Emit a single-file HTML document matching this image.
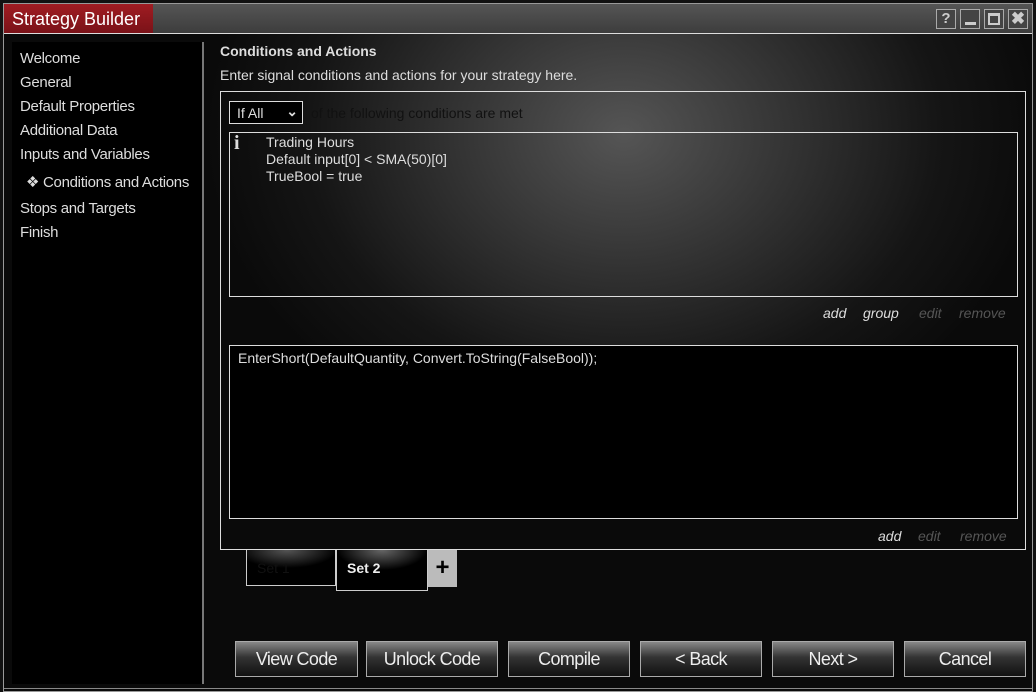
<!DOCTYPE html>
<html><head><style>
*{margin:0;padding:0;box-sizing:border-box}
body{width:1036px;height:692px;background:#111;position:relative;overflow:hidden;font-family:"Liberation Sans",sans-serif;color:#ddd}
.a{position:absolute}
.win{left:3px;top:3px;width:1030px;height:689px;background:#0a0a0a;border:1px solid #999}
.tb{left:4px;top:4px;width:1028px;height:30px;background:linear-gradient(#555,#3c3c3c)}
.title{left:4px;top:4px;width:149px;height:29px;background:linear-gradient(#a01c22,#7a1218);color:#fff;font-size:18px;padding:5px 0 0 8px}
.wb{top:9px;width:20px;height:20px;border:1px solid #aaa;background:#444;color:#ccc;font-weight:bold;font-size:15px;text-align:center;line-height:18px}
.nav{left:12px;top:42px;width:190px;height:642px;background:#000;font-size:15px;letter-spacing:-0.3px}
.nav div{position:absolute;left:8px}
.content{left:204px;top:34px;width:827px;height:656px;background:radial-gradient(ellipse 420px 330px at 420px 100px,#555 0%,#333 40%,#151515 75%,#0a0a0a 100%)}
.box{border:1px solid #ddd;background:#000}
.btn{top:641px;height:36px;border:1px solid #aaa;background:linear-gradient(#888 0%,#333 45%,#111 100%);color:#eee;font-size:18px;letter-spacing:-0.6px;text-align:center;line-height:34px}
.lk{font-style:italic;font-size:14px}
</style></head><body>
<div class="a win"></div>
<div class="a tb"></div>
<div class="a title">Strategy Builder</div>
<div class="a wb" style="left:936px">?</div>
<div class="a wb" style="left:960px"><div style="position:absolute;left:4px;top:12px;width:11px;height:3px;background:#ccc"></div></div>
<div class="a wb" style="left:984px"><div style="position:absolute;left:3px;top:3px;width:12px;height:12px;border:2px solid #ccc;border-top-width:3px"></div></div>
<div class="a wb" style="left:1008px;font-size:17px">✖</div>
<div class="a" style="left:4px;top:33px;width:1028px;height:1px;background:#ddd"></div>
<div class="a content"></div>
<div class="a" style="left:202px;top:42px;width:2px;height:642px;background:#777"></div>
<div class="a nav">
<div style="top:8px">Welcome</div>
<div style="top:32px">General</div>
<div style="top:56px">Default Properties</div>
<div style="top:80px">Additional Data</div>
<div style="top:104px">Inputs and Variables</div>
<div style="top:131px;left:14px">❖ Conditions and Actions</div>
<div style="top:158px">Stops and Targets</div>
<div style="top:182px">Finish</div>
</div>
<div class="a" style="left:220px;top:43px;font-size:14px;font-weight:bold;color:#ddd">Conditions and Actions</div>
<div class="a" style="left:220px;top:67px;font-size:14px;color:#ddd">Enter signal conditions and actions for your strategy here.</div>
<div class="a" style="left:220px;top:91px;width:806px;height:459px;border:1px solid #ddd"></div>
<div class="a" style="left:229px;top:101px;width:74px;height:23px;border:1px solid #ddd;background:#000;font-size:14px;padding:3px 0 0 7px">If All <span style="position:absolute;right:4px;top:1px;font-weight:bold">⌄</span></div>
<div class="a" style="left:311px;top:105px;font-size:14px;color:#111">of the following conditions are met</div>
<div class="a" style="left:229px;top:132px;width:789px;height:165px;border:1px solid #ddd"></div>
<div class="a" style="left:234px;top:132px;font-family:'Liberation Serif',serif;font-size:20px;font-weight:bold;color:#ddd">i</div>
<div class="a" style="left:266px;top:134px;font-size:14px;line-height:17px;color:#ddd">Trading Hours<br>Default input[0] &lt; SMA(50)[0]<br>TrueBool = true</div>
<div class="a lk" style="left:823px;top:305px;color:#ddd">add</div>
<div class="a lk" style="left:863px;top:305px;color:#ddd">group</div>
<div class="a lk" style="left:919px;top:305px;color:#555">edit</div>
<div class="a lk" style="left:959px;top:305px;color:#555">remove</div>
<div class="a box" style="left:229px;top:345px;width:789px;height:174px"></div>
<div class="a" style="left:238px;top:350px;font-size:14px;color:#ddd">EnterShort(DefaultQuantity, Convert.ToString(FalseBool));</div>
<div class="a lk" style="left:878px;top:528px;color:#ddd">add</div>
<div class="a lk" style="left:918px;top:528px;color:#555">edit</div>
<div class="a lk" style="left:960px;top:528px;color:#555">remove</div>
<div class="a" style="left:246px;top:550px;width:90px;height:36px;border:1px solid #ccc;border-top:none;background:radial-gradient(ellipse 50px 18px at 40px 0,#555,#000);font-size:14px;color:#111;padding:10px 0 0 10px">Set 1</div>
<div class="a" style="left:336px;top:550px;width:92px;height:41px;border:1px solid #ccc;border-top:none;background:radial-gradient(ellipse 45px 20px at 45px 0,#666,#000);font-size:14px;font-weight:bold;color:#eee;padding:10px 0 0 10px">Set 2</div>
<div class="a" style="left:428px;top:550px;width:29px;height:37px;background:#bbb;color:#000;font-size:24px;font-weight:bold;text-align:center;line-height:36px">+</div>
<div class="a btn" style="left:235px;width:123px">View Code</div>
<div class="a btn" style="left:366px;width:132px">Unlock Code</div>
<div class="a btn" style="left:508px;width:122px">Compile</div>
<div class="a btn" style="left:640px;width:122px">&lt; Back</div>
<div class="a btn" style="left:772px;width:122px">Next &gt;</div>
<div class="a btn" style="left:904px;width:122px">Cancel</div>
<div class="a" style="left:4px;top:688px;width:1028px;height:1px;background:#888"></div>
</body></html>
